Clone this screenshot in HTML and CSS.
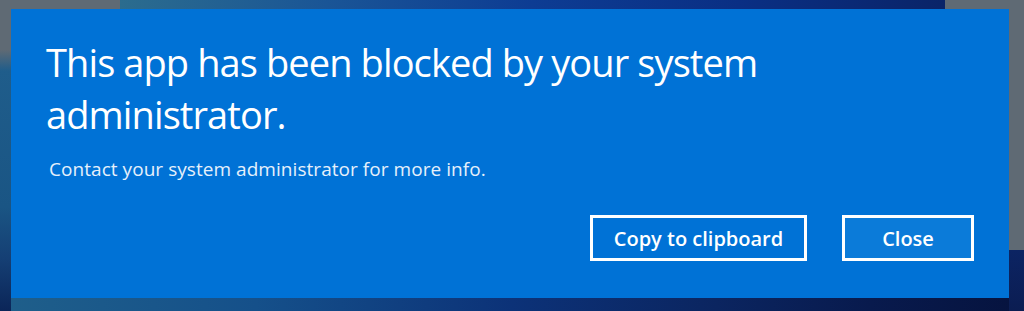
FILE: index.html
```html
<!DOCTYPE html>
<html lang="en">
<head>
<meta charset="utf-8">
<title>Blocked</title>
<link rel="stylesheet" href="styles.css">
</head>
<body>
<div class="screen">
  <div class="dialog">
    <h1 class="title">This app has been blocked by your system administrator.</h1>
    <p class="message">Contact your system administrator for more info.</p>
    <div class="actions">
      <button class="btn btn-copy">Copy to clipboard</button>
      <button class="btn btn-close">Close</button>
    </div>
  </div>
</div>
</body>
</html>
```

FILE: styles.css
```css
html, body {
  margin: 0;
  padding: 0;
}
body {
  width: 1024px;
  height: 311px;
  overflow: hidden;
  font-family: "Open Sans", "Noto Sans", sans-serif;
  background:
    linear-gradient(90deg, #2b6c8e 0%, #1a5596 25%, #0d3c93 50%, #0a2f84 75%, #0a2468 100%) 120px 0 / 825px 9px no-repeat,
    linear-gradient(180deg, #5f6a74 0%, #1f5d8b 8%, #1a5584 60%, #153f74 80%, #0b2558 100%) 0 50px / 11px 261px no-repeat,
    linear-gradient(180deg, #0c2463 0%, #0b1d52 100%) 1009px 250px / 15px 61px no-repeat,
    linear-gradient(90deg, #1f5f8a 0%, #15508a 25%, #0c3278 50%, #0b2560 70%, #081a4d 85%, #06133e 100%) 0 298px / 1024px 13px no-repeat,
    #5f6a74;
}
.screen {
  box-sizing: border-box;
  width: 1024px;
  height: 311px;
  padding: 9px 15px 13px 11px;
}
.dialog {
  box-sizing: border-box;
  width: 998px;
  height: 289px;
  background: #0072d6;
  color: #ffffff;
  padding: 0 35px 0 35px;
  display: flex;
  flex-direction: column;
}
.title {
  margin: 27px 0 0 0;
  width: 740px;
  font-size: 38px;
  font-weight: 400;
  line-height: 52px;
  letter-spacing: -0.9px;
}
.message {
  margin: 16px 0 0 3px;
  font-size: 19px;
  line-height: 26px;
  color: #e6f0fb;
  letter-spacing: 0.05px;
}
.actions {
  display: flex;
  justify-content: flex-end;
  gap: 35px;
  margin-top: 33px;
}
.btn {
  box-sizing: border-box;
  height: 46px;
  border: 3px solid #ffffff;
  color: #ffffff;
  font-family: "Open Sans", "Noto Sans", sans-serif;
  font-size: 20px;
  font-weight: 600;
  padding: 0;
}
.btn-copy {
  width: 217px;
  background: #0072d6;
}
.btn-close {
  width: 132px;
  background: #0b7bd9;
}
```
